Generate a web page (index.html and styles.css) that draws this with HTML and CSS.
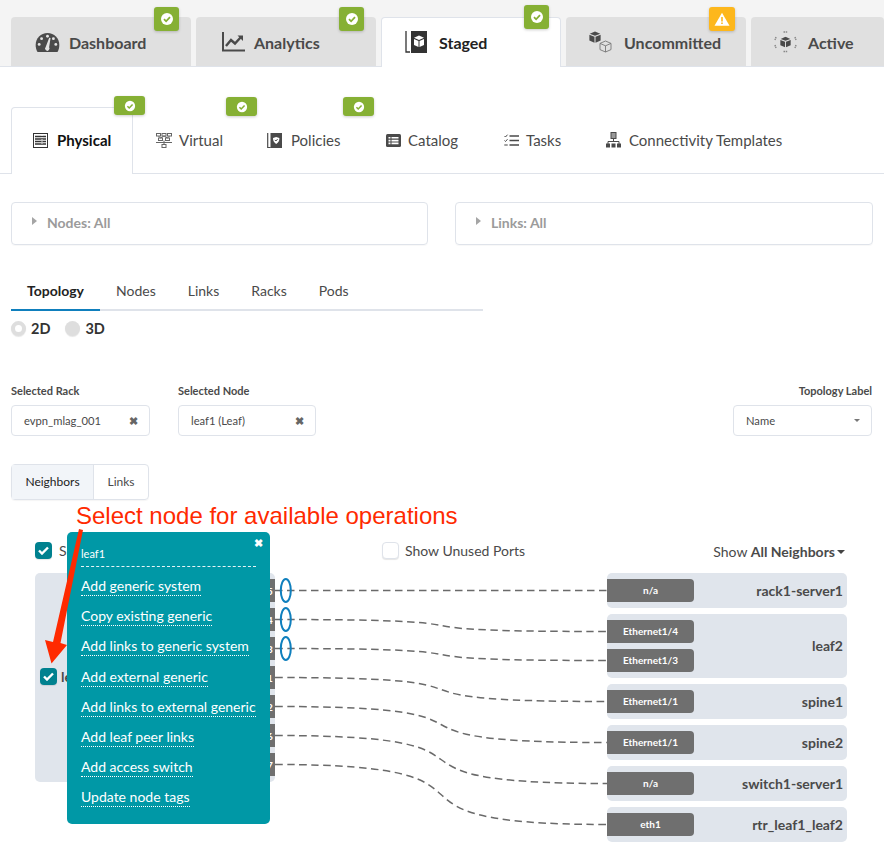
FILE: index.html
```html
<!DOCTYPE html>
<html lang="en">
<head>
<meta charset="utf-8">
<title>Staged - Physical</title>
<link rel="stylesheet" href="styles.css">
</head>
<body>
<svg class="defs" width="0" height="0" aria-hidden="true">
  <symbol id="ok" viewBox="0 0 14 14"><circle cx="7" cy="7" r="6" fill="#fff"/><path d="M4 7.200l2.100 2.100L10 5.200" fill="none" stroke="#86b034" stroke-width="1.800"/></symbol>
  <symbol id="cube" viewBox="0 0 16 16"><path d="M8 .5l7 3L8 6.300 1 3.500z"/><path d="M.5 5l6.800 2.700V15.500L.5 12.600z"/><path d="M15.500 5L8.700 7.700v7.800l6.800-2.900z"/></symbol>
</svg>
<nav class="main-tabs">
  <a class="main-tab tab-dashboard">
    <svg class="mi" width="25" height="21" viewBox="0 0 26 22"><path fill="#4a4a4a" d="M13 1C6 1 .6 6.600.6 13.500c0 2.600.7 5.500 1.900 7.500h21c1.200-2 1.900-4.900 1.900-7.500C25.400 6.600 20 1 13 1z"/><g fill="#e4e4e4"><circle cx="13" cy="4.500" r="1.500"/><circle cx="6.800" cy="7" r="1.500"/><circle cx="4.300" cy="13" r="1.500"/><circle cx="21.700" cy="13" r="1.500"/><circle cx="19.200" cy="7" r="1.500"/><path d="M14.800 6l1.400.4-1.500 9.700a2.300 2.300 0 1 1-3.600-.3z"/></g></svg>
    <span>Dashboard</span>
    <span class="badge badge-main"><svg width="14" height="14"><use href="#ok"/></svg></span>
  </a>
  <a class="main-tab tab-analytics">
    <svg class="mi" width="23" height="20" viewBox="0 0 23 20"><path d="M1 0v18.500h22" fill="none" stroke="#4a4a4a" stroke-width="2"/><path d="M4 14l5-6 4 3.500L19 5" fill="none" stroke="#4a4a4a" stroke-width="2.400"/><path d="M15.500 3.500H21V9z" fill="#4a4a4a"/></svg>
    <span>Analytics</span>
    <span class="badge badge-main"><svg width="14" height="14"><use href="#ok"/></svg></span>
  </a>
  <a class="main-tab tab-staged is-active">
    <svg class="mi" width="22" height="22" viewBox="0 0 22 22"><path d="M1 0v21h4" fill="none" stroke="#333" stroke-width="1.300"/><rect x="6" y="0" width="16" height="22" fill="#333"/><g fill="#fff"><path d="M14 4.500l5 2.200-5 2.200-5-2.200z"/><path d="M9 8l4.500 2v6L9 14z"/><path d="M19 8l-4.500 2v6L19 14z"/></g></svg>
    <span>Staged</span>
    <span class="badge badge-main badge-high"><svg width="14" height="14"><use href="#ok"/></svg></span>
  </a>
  <a class="main-tab tab-uncommitted">
    <svg class="mi" width="23" height="22" viewBox="0 0 23 22"><svg x="0" y="0" width="12" height="12" viewBox="0 0 16 16" fill="#4a4a4a"><use href="#cube"/></svg><g fill="none" stroke="#777" stroke-width=".9"><path d="M16.500 10l5.500 2.400v6.200L16.500 21 11 18.600v-6.200z"/><path d="M11 12.400l5.500 2.400 5.500-2.400M16.500 14.800V21"/></g></svg>
    <span>Uncommitted</span>
    <span class="badge badge-main badge-warn"><svg width="16" height="14" viewBox="0 0 16 14"><path d="M8 .8l7.500 13H.5z" fill="#fff"/><path d="M7.200 5h1.600v4.500H7.200zM7.200 10.400h1.600V12H7.200z" fill="#fdb71c"/></svg></span>
  </a>
  <a class="main-tab tab-active">
    <svg class="mi" width="23" height="22" viewBox="0 0 23 22"><svg x="6" y="5.500" width="11" height="11" viewBox="0 0 16 16" fill="#4a4a4a"><use href="#cube"/></svg><path d="M9.500 1h4M9.500 20.500h4M2 6l-1 3M21 6l1 3M1 14l1 3M22 14l-1 3" fill="none" stroke="#888" stroke-width="1.500" stroke-dasharray="1.500 .7"/></svg>
    <span>Active</span>
  </a>
</nav>

<nav class="sub-tabs">
  <a class="sub-tab is-active">
    <svg width="15" height="15" viewBox="0 0 15 15"><rect x=".5" y=".5" width="14" height="14" fill="#fff" stroke="#333"/><path d="M2 3.500h11M2 6h11M2 8.500h11M2 11h11" stroke="#333" stroke-width="1.500"/><path d="M9 2v10" stroke="#fff" stroke-width=".8" stroke-dasharray="1 1"/></svg>
    <span>Physical</span>
    <span class="badge badge-sub"><svg width="12" height="12"><use href="#ok"/></svg></span>
  </a>
  <a class="sub-tab">
    <svg width="16" height="15" viewBox="0 0 16 15"><g fill="none" stroke="#666" stroke-width="1"><rect x=".5" y=".5" width="4" height="2.500"/><rect x="6" y=".5" width="4" height="2.500"/><rect x="11.500" y=".5" width="4" height="2.500"/><rect x="2.500" y="5" width="4" height="2.500"/><rect x="9.500" y="5" width="4" height="2.500"/><rect x="6" y="11.500" width="4" height="3"/><path d="M2.500 3l2 2M8 3L4.500 5M8 3l3.500 2M13.500 3l-2 2M0 9.500h16M8 7.500v4"/></g></svg>
    <span>Virtual</span>
    <span class="badge badge-sub badge-virtual"><svg width="12" height="12"><use href="#ok"/></svg></span>
  </a>
  <a class="sub-tab">
    <svg width="15" height="15" viewBox="0 0 15 15"><path d="M.7 0v14.500h3" fill="none" stroke="#4a4a4a" stroke-width="1.200"/><rect x="3.500" y="0" width="11.500" height="15" fill="#4a4a4a"/><path d="M9.200 4l3.200 1.100c0 2.800-.9 4.700-3.200 5.900-2.300-1.200-3.200-3.100-3.200-5.900z" fill="#fff"/><path d="M7.800 6.900l1.100 1.100 1.700-1.900" fill="none" stroke="#4a4a4a"/></svg>
    <span>Policies</span>
    <span class="badge badge-sub badge-policies"><svg width="12" height="12"><use href="#ok"/></svg></span>
  </a>
  <a class="sub-tab">
    <svg width="15" height="13" viewBox="0 0 15 13"><rect width="15" height="13" rx="1.500" fill="#4a4a4a"/><path d="M2.500 3h2v1.600h-2zM2.500 5.800h2v1.600h-2zM2.500 8.600h2v1.600h-2zM5.500 3h7v1.600h-7zM5.500 5.800h7v1.600h-7zM5.500 8.600h7v1.600h-7z" fill="#fff"/></svg>
    <span>Catalog</span>
  </a>
  <a class="sub-tab">
    <svg width="15" height="13" viewBox="0 0 15 13"><path d="M5.500 2h9.500M5.500 6.500h9.500M5.500 11h9.500" stroke="#4a4a4a" stroke-width="1.600"/><path d="M.5 2l1 1L3.500.7M.5 6.500l1 1 2-2.300" fill="none" stroke="#4a4a4a" stroke-width="1"/><path d="M.5 11h3" stroke="#4a4a4a" stroke-width="1.600" stroke-dasharray="1.200 .6"/></svg>
    <span>Tasks</span>
  </a>
  <a class="sub-tab">
    <svg width="15" height="16" viewBox="0 0 15 16"><rect x="5" y=".5" width="5" height="6" fill="#999" stroke="#4a4a4a"/><path d="M7.500 6.500V10M2 12V9.500h11V12" fill="none" stroke="#4a4a4a"/><path d="M0 11.500h4V15.500H0zM5.500 11.500h4V15.500h-4zM11 11.500h4V15.500h-4z" fill="#4a4a4a"/></svg>
    <span>Connectivity Templates</span>
  </a>
</nav>

<section class="filters">
  <div class="filter"><i class="caret-right"></i>Nodes: All</div>
  <div class="filter"><i class="caret-right"></i>Links: All</div>
</section>

<nav class="view-tabs">
  <a class="view-tab is-active">Topology</a>
  <a class="view-tab">Nodes</a>
  <a class="view-tab">Links</a>
  <a class="view-tab">Racks</a>
  <a class="view-tab">Pods</a>
</nav>

<div class="radios">
  <label class="radio"><i class="radio-dot is-on"></i>2D</label>
  <label class="radio"><i class="radio-dot"></i>3D</label>
</div>

<section class="selectors">
  <div class="field">
    <div class="field-label">Selected Rack</div>
    <div class="select select-rack"><span>evpn_mlag_001</span><b class="clear">✖</b></div>
  </div>
  <div class="field">
    <div class="field-label">Selected Node</div>
    <div class="select select-node"><span>leaf1 (Leaf)</span><b class="clear">✖</b></div>
  </div>
  <div class="field field-right">
    <div class="field-label">Topology Label</div>
    <div class="select select-label"><span>Name</span><i class="caret-down"></i></div>
  </div>
</section>

<div class="toggle">
  <span class="toggle-item is-active">Neighbors</span>
  <span class="toggle-item">Links</span>
</div>

<section class="topology">
  <div class="topology-head">
    <span class="check-row"><i class="checkbox is-on"><svg width="11" height="9" viewBox="0 0 11 9"><path d="M1 4.500l3 3L10 1.500" fill="none" stroke="#fff" stroke-width="2.400"/></svg></i>Show</span>
    <span class="check-row unused"><i class="checkbox"></i>Show Unused Ports</span>
    <span class="show-all">Show <b>All Neighbors</b><i class="caret-down dark"></i></span>
  </div>
  <div class="topology-body">
    <div class="node">
      <span class="check-row node-check"><i class="checkbox is-on"><svg width="11" height="9" viewBox="0 0 11 9"><path d="M1 4.500l3 3L10 1.500" fill="none" stroke="#fff" stroke-width="2.400"/></svg></i>leaf1</span>
      <div class="node-ports">
        <span class="nport">5</span><span class="nport">4</span><span class="nport">3</span><span class="nport">1</span><span class="nport">2</span><span class="nport">6</span><span class="nport">7</span>
      </div>
    </div>
    <div class="neighbors">
      <div class="neighbor"><div class="chips"><span class="chip">n/a</span></div><span class="nname">rack1-server1</span></div>
      <div class="neighbor"><div class="chips"><span class="chip">Ethernet1/4</span><span class="chip">Ethernet1/3</span></div><span class="nname">leaf2</span></div>
      <div class="neighbor"><div class="chips"><span class="chip">Ethernet1/1</span></div><span class="nname">spine1</span></div>
      <div class="neighbor"><div class="chips"><span class="chip">Ethernet1/1</span></div><span class="nname">spine2</span></div>
      <div class="neighbor"><div class="chips"><span class="chip">n/a</span></div><span class="nname">switch1-server1</span></div>
      <div class="neighbor"><div class="chips"><span class="chip">eth1</span></div><span class="nname">rtr_leaf1_leaf2</span></div>
    </div>
    <svg class="links" width="884" height="272" viewBox="0 573 884 272">
      <g fill="none" stroke="#6a6a6a" stroke-width="1.500" stroke-dasharray="7.500 4.500">
        <path d="M275 590.500H607"/>
        <path d="M275 619.500C540 619.500 342 631.500 607 631.500"/>
        <path d="M275 648.500C540 648.500 342 660.500 607 660.500"/>
        <path d="M275 677.500C540 677.500 342 701.500 607 701.500"/>
        <path d="M275 706.500C540 706.500 342 742.500 607 742.500"/>
        <path d="M275 735.500C540 735.500 342 783.500 607 783.500"/>
        <path d="M275 764.500C540 764.500 342 824.500 607 824.500"/>
      </g>
      <g fill="none" stroke="#0f7fbd" stroke-width="2">
        <ellipse cx="285.800" cy="590.500" rx="5" ry="11.500"/>
        <ellipse cx="285.800" cy="619.500" rx="5" ry="11.500"/>
        <ellipse cx="285.800" cy="648.500" rx="5" ry="11.500"/>
      </g>
    </svg>
    <aside class="popover">
      <b class="pop-close">✖</b>
      <div class="pop-title">leaf1</div>
      <ul class="pop-list">
        <li><a>Add generic system</a></li>
        <li><a>Copy existing generic</a></li>
        <li><a>Add links to generic system</a></li>
        <li><a>Add external generic</a></li>
        <li><a>Add links to external generic</a></li>
        <li><a>Add leaf peer links</a></li>
        <li><a>Add access switch</a></li>
        <li><a>Update node tags</a></li>
      </ul>
    </aside>
  </div>
  <div class="callout">Select node for available operations</div>
  <svg class="arrow" width="50" height="142" viewBox="0 0 50 142"><path d="M39 4L43 5 20.500 118 27 120 11.500 138.500 5 115 13 117z" fill="#ff2a00"/></svg>
</section>
</body>
</html>
```
FILE: styles.css
```css
* { box-sizing: border-box; }
html, body { margin: 0; height: 845px; overflow: hidden; background: #fff; }
body { font-family: Lato, "Liberation Sans", sans-serif; color: #4a4a4a; width: 884px; }
.defs { position: absolute; }
i, a { display: inline-block; font-style: normal; }

.main-tabs { display: flex; gap: 5px; height: 67px; padding: 17px 0 0 11px; background: #f4f4f4; border-bottom: 1px solid #dfe3ea; }
.main-tab { position: relative; flex: 0 0 180px; height: 49px; display: flex; align-items: center; background: #e0e0e0; border-radius: 4px 4px 0 0; font-size: 16px; font-weight: 700; color: #4a4a4a; padding-top: 1px; }
.main-tab.is-active { height: 50px; background: #fff; border: 1px solid #dfe3ea; border-bottom: 0; color: #222; padding-top: 0; padding-bottom: 1px; }
.tab-dashboard { padding-left: 24px; gap: 9px; }
.tab-analytics { padding-left: 26px; gap: 9px; }
.tab-staged { padding-left: 23px; gap: 12px; }
.tab-uncommitted { padding-left: 23px; gap: 12px; }
.main-tabs .tab-active { flex: 0 0 133px; padding-left: 23px; gap: 11px; }
.mi { flex: none; }

.badge { position: absolute; display: flex; align-items: center; justify-content: center; background: #86b034; border-radius: 3px; box-shadow: 0 1px 3px rgba(0,0,0,.2); }
.badge-main { top: -10px; right: 12px; width: 25px; height: 24px; }
.badge-high { top: -13px; right: 11px; }
.badge-warn { background: #fdb71c; width: 26px; right: 11px; }
.badge-sub { top: -12px; right: -13px; width: 31px; height: 19px; }
.sub-tab .badge-virtual { top: -10px; right: auto; left: 93px; }
.sub-tab .badge-policies { top: -10px; right: auto; left: 99px; }

.sub-tabs { display: flex; height: 67px; margin-top: 40px; padding-left: 11px; border-bottom: 1px solid #dfe3ea; }
.sub-tab { position: relative; display: flex; align-items: center; gap: 9px; height: 66px; font-size: 15px; color: #4a4a4a; padding: 0; white-space: nowrap; }
.sub-tab svg { flex: none; }
.sub-tab.is-active { width: 122px; height: 67px; padding: 0 0 2px 21px; background: #fff; border: 1px solid #dfe3ea; border-bottom: 0; border-radius: 4px 0 0 0; font-weight: 700; color: #111; }
.sub-tab:nth-child(2) { width: 111px; padding-left: 23px; gap: 7px; }
.sub-tab:nth-child(3) { width: 118px; padding-left: 23px; }
.sub-tab:nth-child(4) { width: 118px; padding-left: 24px; gap: 7px; }
.sub-tab:nth-child(5) { width: 102px; padding-left: 24px; gap: 7px; }
.sub-tab:nth-child(6) { padding-left: 24px; gap: 8px; }

.filters { display: flex; gap: 27px; margin: 28px 11px 0; }
.filter { flex: 1 1 0; height: 43px; display: flex; align-items: center; padding: 0 0 3px 20px; gap: 10px; border: 1px solid #dfe3ea; border-radius: 4px; font-size: 14px; font-weight: 700; color: #9b9b9b; box-shadow: 0 1px 1px rgba(0,0,0,.03); }
.filter + .filter { flex: 0 0 418px; }
.caret-right { width: 0; height: 0; border-left: 5px solid #a5a5a5; border-top: 4.500px solid transparent; border-bottom: 4.500px solid transparent; margin-bottom: 2px; }

.view-tabs { display: flex; width: 472px; height: 40px; margin: 26px 0 0 11px; border-bottom: 2px solid #dfe3ea; font-size: 14px; }
.view-tab { height: 40px; padding: 11px 16px 0; color: #4a4a4a; }
.view-tab.is-active { font-weight: 700; color: #222; border-bottom: 2px solid #0f7fbd; }

.radios { display: flex; gap: 15px; margin: 8px 0 0 11px; height: 18px; }
.radio { display: flex; align-items: center; gap: 5px; font-size: 14.500px; font-weight: 700; color: #333; }
.radio-dot { width: 15px; height: 15px; border-radius: 50%; background: #dedede; box-shadow: 0 1px 1px rgba(0,0,0,.1); }
.radio-dot.is-on { background: #fff; border: 4px solid #dedede; }

.selectors { display: flex; margin: 47px 12px 0 11px; }
.field { margin-right: 28px; }
.field-right { margin: 0 0 0 auto; text-align: right; }
.field-label { font-size: 11px; font-weight: 700; line-height: 14px; margin-bottom: 7px; }
.select { display: flex; align-items: center; justify-content: space-between; height: 31px; border: 1px solid #dfe3ea; border-radius: 4px; font-size: 11.200px; padding: 0 11px 0 12px; text-align: left; }
.select-rack { width: 139px; }
.select-node { width: 138px; }
.select-label { width: 139px; }
.clear { font-size: 10.500px; color: #666; }
.caret-down { width: 0; height: 0; border-top: 3px solid #777; border-left: 3.500px solid transparent; border-right: 3.500px solid transparent; }

.toggle { display: inline-flex; height: 36px; margin: 28px 0 0 11px; border: 1px solid #dfe3ea; border-radius: 4px; font-size: 12px; box-shadow: 0 1px 1px rgba(0,0,0,.04); vertical-align: top; }
.toggle-item { display: flex; align-items: center; justify-content: center; width: 54px; padding-bottom: 2px; color: #4a4a4a; }
.toggle-item.is-active { width: 82px; background: #f2f5f9; border-right: 1px solid #dfe3ea; color: #222; }

.topology { position: relative; margin-top: 42px; height: 303px; }
.topology-head { position: relative; height: 31px; padding-left: 35px; display: flex; align-items: flex-start; font-size: 14px; }
.check-row { display: flex; align-items: center; gap: 7px; }
.checkbox { display: flex; align-items: center; justify-content: center; width: 17px; height: 17px; border-radius: 4px; background: #fff; border: 1px solid #dfe3ea; box-shadow: 0 1px 1px rgba(0,0,0,.1); }
.checkbox.is-on { background: #00818f; border: 0; }
.unused { position: absolute; left: 382px; top: 0; gap: 6px; }
.show-all { position: absolute; right: 39px; top: 1px; display: flex; align-items: center; white-space: pre; }
.show-all b { color: #4a4a4a; }
.caret-down.dark { border-top-color: #444; border-top-width: 4px; border-left-width: 4px; border-right-width: 4px; margin-left: 2px; }

.topology-body { position: relative; height: 272px; }
.node { position: absolute; left: 35px; top: 0; width: 240px; height: 209px; background: #e0e5ec; border-radius: 5px; }
.node-check { position: absolute; left: 5px; top: 95px; font-size: 14px; gap: 4px; font-weight: 700; }
.node-ports { position: absolute; right: 0; top: 6px; display: flex; flex-direction: column; gap: 6px; }
.nport { display: flex; align-items: center; justify-content: center; width: 24px; height: 23px; background: #6f6f6f; color: #fff; font-size: 10px; font-weight: 700; padding-left: 14px; }
.neighbors { position: absolute; left: 607px; top: 0; width: 240px; display: flex; flex-direction: column; gap: 6px; }
.neighbor { display: flex; align-items: center; justify-content: space-between; padding: 6px 4px 6px 0; background: #e0e5ec; border-radius: 5px; }
.chips { display: flex; flex-direction: column; gap: 6px; }
.chip { display: flex; align-items: center; justify-content: center; width: 87px; height: 23px; padding-bottom: 2px; background: #6f6f6f; border-radius: 0 4px 4px 0; color: #fff; font-size: 10px; font-weight: 700; }
.nname { font-size: 14px; font-weight: 700; color: #4a4a4a; padding-bottom: 1px; }
.links { position: absolute; left: 0; top: 0; pointer-events: none; }

.popover { position: absolute; left: 67px; top: -41px; width: 203px; height: 292px; background: #0098a6; border-radius: 5px; color: #fff; padding: 14px 14px 0; }
.pop-close { position: absolute; top: 5px; right: 7px; font-size: 10.500px; }
.pop-title { font-size: 11px; line-height: 15px; border-bottom: 1px dashed #e4f4f6; height: 21px; }
.pop-list { list-style: none; margin: 10px 0 0; padding: 0; display: flex; flex-direction: column; gap: 10.200px; }
.pop-list li { height: 20px; line-height: 18px; font-size: 14px; white-space: nowrap; }
.pop-list a { border-bottom: 1px dotted #fff; line-height: 18px; }

.callout { position: absolute; left: 76px; top: -41px; font: 24px/30px "Liberation Sans", Arial, sans-serif; color: #ff2a00; white-space: nowrap; }
.arrow { position: absolute; left: 40px; top: -17px; }
```
